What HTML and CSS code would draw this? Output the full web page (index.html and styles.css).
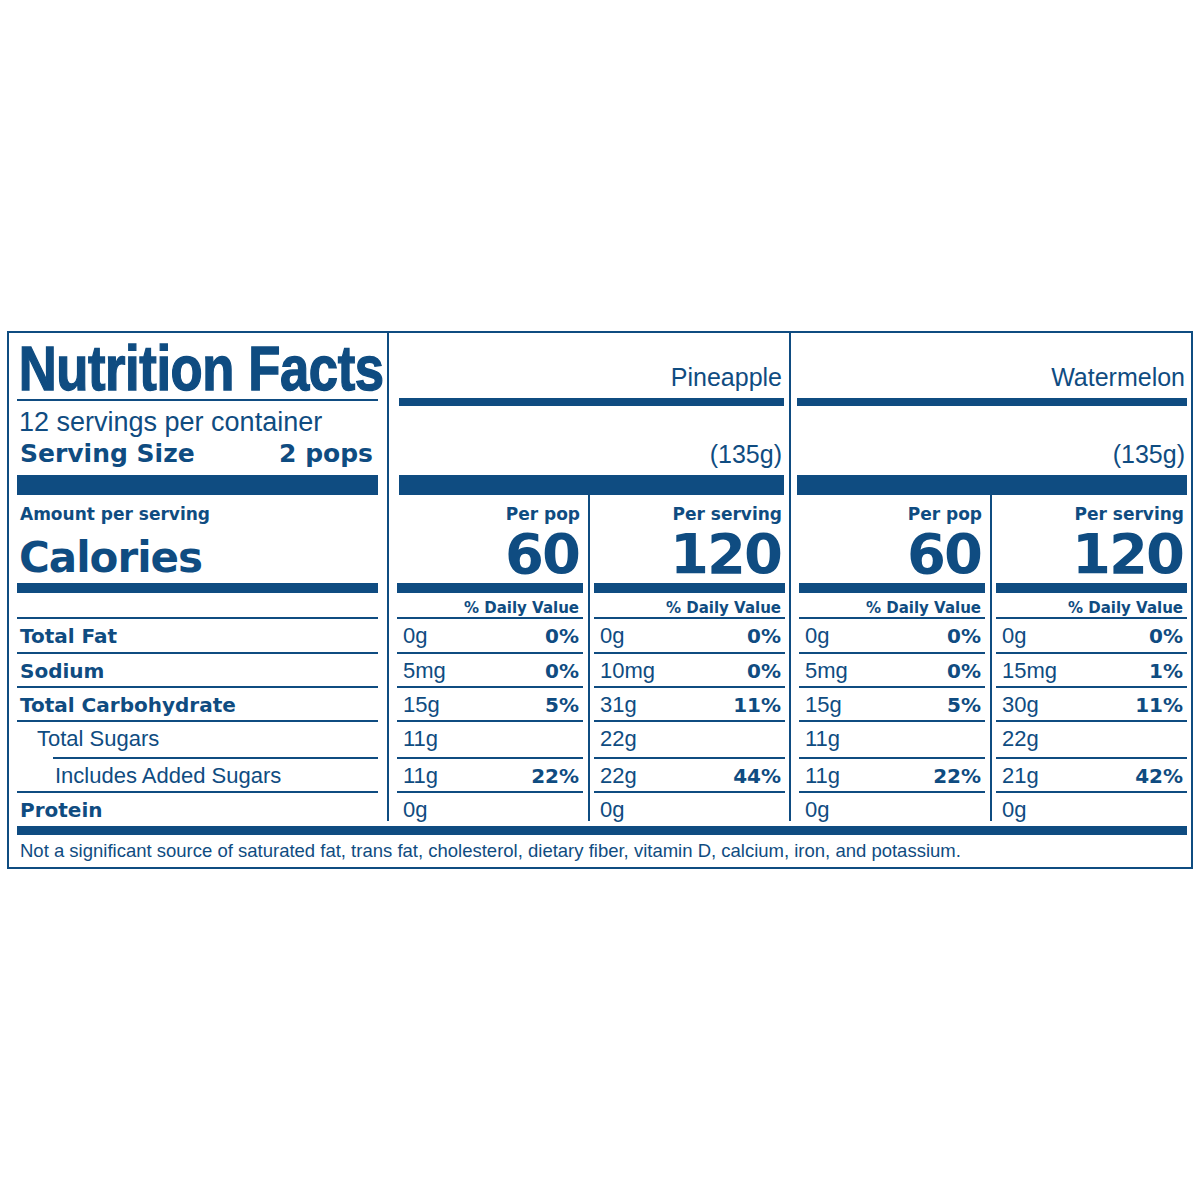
FILE: index.html
```html
<!DOCTYPE html>
<html lang="en">
<head>
<meta charset="utf-8">
<title>Nutrition Facts</title>
<link rel="stylesheet" href="styles.css">
</head>
<body>
<div class="label">
  <div class="cols">
    <div class="left">
      <div class="lhead">
        <h1 class="title"><span>Nutrition Facts</span></h1>
        <div class="rule"></div>
        <div class="servings">12 servings per container</div>
        <div class="ssize hv"><span>Serving Size</span><span>2 pops</span></div>
      </div>
      <div class="bar-thick"></div>
      <div class="cal-sec">
        <div class="amount hv">Amount per serving</div>
        <div class="cal-label hv">Calories</div>
      </div>
      <div class="bar-med"></div>
      <div class="dv"></div>
      <div class="rule"></div>
      <div class="row r-a"><span class="lab hv">Total Fat</span></div>
      <div class="rule"></div>
      <div class="row"><span class="lab hv">Sodium</span></div>
      <div class="rule"></div>
      <div class="row"><span class="lab hv">Total Carbohydrate</span></div>
      <div class="rule"></div>
      <div class="row r-b"><span class="lab ind1">Total Sugars</span></div>
      <div class="rule indent"></div>
      <div class="row"><span class="lab ind2">Includes Added Sugars</span></div>
      <div class="rule"></div>
      <div class="row r-last"><span class="lab hv">Protein</span></div>
    </div>

    <div class="product p1">
      <div class="phead">
        <div class="flavor">Pineapple</div>
        <div class="pbar"></div>
        <div class="weight">(135g)</div>
        <div class="bar-thick"></div>
      </div>
      <div class="subs">
        <div class="sub">
          <div class="cal-sec">
            <div class="per hv">Per pop</div>
            <div class="calnum hv">60</div>
          </div>
          <div class="bar-med"></div>
          <div class="dv hv">% Daily Value</div>
          <div class="rule"></div>
          <div class="row r-a"><span class="amt">0g</span><span class="pct hv">0%</span></div>
          <div class="rule"></div>
          <div class="row"><span class="amt">5mg</span><span class="pct hv">0%</span></div>
          <div class="rule"></div>
          <div class="row"><span class="amt">15g</span><span class="pct hv">5%</span></div>
          <div class="rule"></div>
          <div class="row r-b"><span class="amt">11g</span></div>
          <div class="rule"></div>
          <div class="row"><span class="amt">11g</span><span class="pct hv">22%</span></div>
          <div class="rule"></div>
          <div class="row r-last"><span class="amt">0g</span></div>
        </div>
        <div class="sub">
          <div class="cal-sec">
            <div class="per hv">Per serving</div>
            <div class="calnum hv">120</div>
          </div>
          <div class="bar-med"></div>
          <div class="dv hv">% Daily Value</div>
          <div class="rule"></div>
          <div class="row r-a"><span class="amt">0g</span><span class="pct hv">0%</span></div>
          <div class="rule"></div>
          <div class="row"><span class="amt">10mg</span><span class="pct hv">0%</span></div>
          <div class="rule"></div>
          <div class="row"><span class="amt">31g</span><span class="pct hv">11%</span></div>
          <div class="rule"></div>
          <div class="row r-b"><span class="amt">22g</span></div>
          <div class="rule"></div>
          <div class="row"><span class="amt">22g</span><span class="pct hv">44%</span></div>
          <div class="rule"></div>
          <div class="row r-last"><span class="amt">0g</span></div>
        </div>
      </div>
    </div>

    <div class="product p2">
      <div class="phead">
        <div class="flavor">Watermelon</div>
        <div class="pbar"></div>
        <div class="weight">(135g)</div>
        <div class="bar-thick"></div>
      </div>
      <div class="subs">
        <div class="sub">
          <div class="cal-sec">
            <div class="per hv">Per pop</div>
            <div class="calnum hv">60</div>
          </div>
          <div class="bar-med"></div>
          <div class="dv hv">% Daily Value</div>
          <div class="rule"></div>
          <div class="row r-a"><span class="amt">0g</span><span class="pct hv">0%</span></div>
          <div class="rule"></div>
          <div class="row"><span class="amt">5mg</span><span class="pct hv">0%</span></div>
          <div class="rule"></div>
          <div class="row"><span class="amt">15g</span><span class="pct hv">5%</span></div>
          <div class="rule"></div>
          <div class="row r-b"><span class="amt">11g</span></div>
          <div class="rule"></div>
          <div class="row"><span class="amt">11g</span><span class="pct hv">22%</span></div>
          <div class="rule"></div>
          <div class="row r-last"><span class="amt">0g</span></div>
        </div>
        <div class="sub">
          <div class="cal-sec">
            <div class="per hv">Per serving</div>
            <div class="calnum hv">120</div>
          </div>
          <div class="bar-med"></div>
          <div class="dv hv">% Daily Value</div>
          <div class="rule"></div>
          <div class="row r-a"><span class="amt">0g</span><span class="pct hv">0%</span></div>
          <div class="rule"></div>
          <div class="row"><span class="amt">15mg</span><span class="pct hv">1%</span></div>
          <div class="rule"></div>
          <div class="row"><span class="amt">30g</span><span class="pct hv">11%</span></div>
          <div class="rule"></div>
          <div class="row r-b"><span class="amt">22g</span></div>
          <div class="rule"></div>
          <div class="row"><span class="amt">21g</span><span class="pct hv">42%</span></div>
          <div class="rule"></div>
          <div class="row r-last"><span class="amt">0g</span></div>
        </div>
      </div>
    </div>
  </div>
  <div class="foot-bar"></div>
  <div class="foot">Not a significant source of saturated fat, trans fat, cholesterol, dietary fiber, vitamin D, calcium, iron, and potassium.</div>
</div>
</body>
</html>
```

FILE: styles.css
```css
* { box-sizing: border-box; }

body {
  margin: 0;
  padding: 331px 0 0 7px;
  background: #ffffff;
  color: #0f4c81;
  font-family: "Liberation Sans", Arial, sans-serif;
}

.hv {
  font-family: "DejaVu Sans", "Liberation Sans", sans-serif;
  font-weight: 700;
}

.label {
  width: 1186px;
  border: 2px solid #0f4c81;
}

.cols {
  display: flex;
  height: 488px;
}

/* left column */
.left {
  width: 378px;
  padding: 0 9px 0 8px;
  display: flex;
  flex-direction: column;
}

.lhead {
  height: 142px;
  flex: none;
  display: flex;
  flex-direction: column;
}

.title {
  margin: 0;
  height: 66px;
  flex: none;
  padding-top: 5px;
  line-height: 61px;
  font-size: 63px;
  font-weight: 700;
  white-space: nowrap;
}

.title span {
  display: inline-block;
  transform: scaleX(0.835);
  transform-origin: left center;
  -webkit-text-stroke: 1.4px #0f4c81;
  letter-spacing: -0.5px;
  padding-left: 2px;
}

.servings {
  margin-top: 6px;
  line-height: 30px;
  font-size: 27px;
  padding-left: 2px;
  white-space: nowrap;
}

.ssize {
  margin-top: 2px;
  line-height: 30px;
  font-size: 25px;
  display: flex;
  justify-content: space-between;
  padding: 0 5px 0 3px;
}

.rule {
  height: 2px;
  background: #0f4c81;
  flex: none;
}

.rule.indent {
  margin-left: 36px;
}

.bar-thick {
  height: 20px;
  background: #0f4c81;
  flex: none;
}

.bar-med {
  height: 10px;
  background: #0f4c81;
  flex: none;
}

.cal-sec {
  height: 88px;
  flex: none;
}

.amount,
.per {
  padding-top: 8px;
  line-height: 22px;
  font-size: 17px;
  white-space: nowrap;
}

.amount { padding-left: 3px; }

.cal-label {
  margin-top: 9px;
  line-height: 48px;
  font-size: 42px;
  letter-spacing: -1px;
  padding-left: 2px;
}

.dv {
  height: 24px;
  padding: 5px 4px 0 0;
  line-height: 20px;
  font-size: 15px;
  text-align: right;
  white-space: nowrap;
  flex: none;
}

.row {
  height: 32px;
  flex: none;
  display: flex;
  justify-content: space-between;
  align-items: baseline;
  padding: 2px 4px 0 6px;
  line-height: 30px;
  white-space: nowrap;
}

.row.r-a { height: 33px; }
.row.r-b { height: 35px; }
.row.r-last { height: 28px; }

.left .row { padding-left: 3px; }

.lab { font-size: 22px; }
.lab.hv { font-size: 20px; }
.lab.ind1 { padding-left: 17px; }
.lab.ind2 { padding-left: 35px; }

.amt { font-size: 22px; }
.pct { font-size: 20px; }

/* product columns */
.product {
  width: 402px;
  border-left: 2px solid #0f4c81;
  display: flex;
  flex-direction: column;
}

.phead {
  padding: 0 5px 0 10px;
  flex: none;
}

.p2 .phead {
  padding: 0 4px 0 6px;
}

.flavor {
  height: 65px;
  padding: 29px 2px 0 0;
  line-height: 30px;
  font-size: 25px;
  text-align: right;
}

.pbar {
  height: 8px;
  background: #0f4c81;
}

.weight {
  height: 69px;
  padding: 33px 2px 0 0;
  line-height: 30px;
  font-size: 25px;
  text-align: right;
}

.subs {
  display: flex;
  flex: 1;
}

.sub {
  width: 199px;
  flex: none;
  display: flex;
  flex-direction: column;
  padding: 0 5px 0 8px;
}

.sub + .sub {
  width: 201px;
  border-left: 2px solid #0f4c81;
  padding: 0 4px 0 4px;
}

.per {
  text-align: right;
  padding-right: 3px;
}

.calnum {
  margin-top: 6px;
  height: 46px;
  line-height: 46px;
  font-size: 56px;
  letter-spacing: -2px;
  text-align: right;
  padding-right: 4px;
}

/* footer */
.foot-bar {
  margin: 5px 4px 0 8px;
  height: 9px;
  background: #0f4c81;
}

.foot {
  margin-top: 6px;
  padding: 0 0 6px 11px;
  line-height: 20px;
  font-size: 18.5px;
  white-space: nowrap;
}
```
